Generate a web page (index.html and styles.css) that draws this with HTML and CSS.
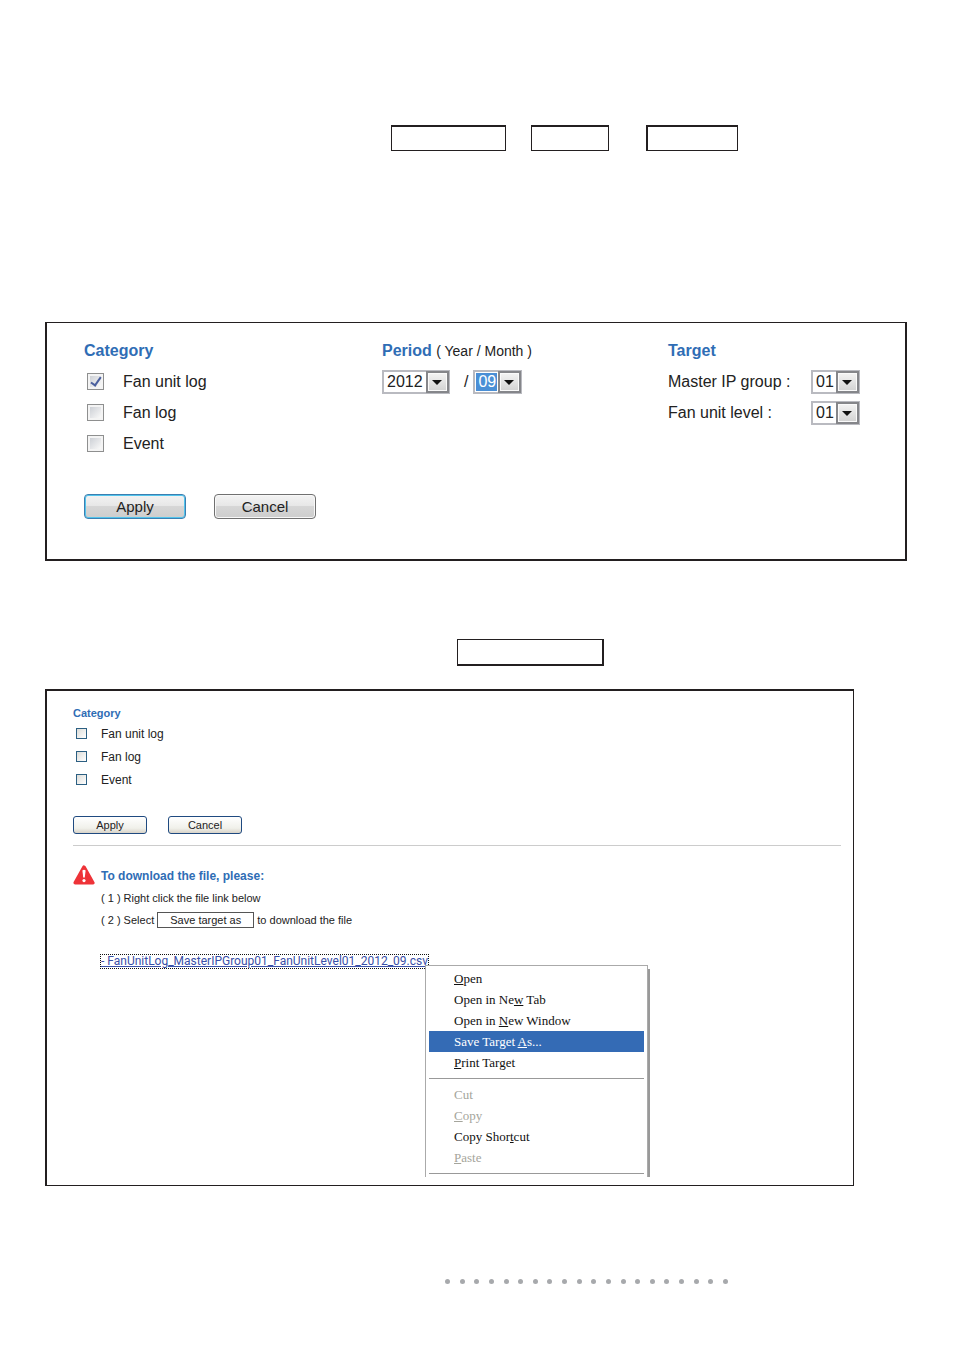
FILE: index.html
```html
<!DOCTYPE html>
<html lang="en">
<head>
    <meta charset="UTF-8">
    <meta name="viewport" content="width=device-width, initial-scale=1.0">
    <title>Log Download</title>
    <link rel="stylesheet" href="styles.css">
</head>
<body>
    <main class="page">
        <div class="frames frames-top">
            <span class="frame frame-large"></span>
            <span class="frame frame-small"></span>
            <span class="frame frame-medium"></span>
        </div>

        <form class="panel filter-panel">
            <div class="columns">
                <section>
                    <h2>Category</h2>
                    <label class="row"><input type="checkbox" checked>Fan unit log</label>
                    <label class="row"><input type="checkbox">Fan log</label>
                    <label class="row"><input type="checkbox">Event</label>
                </section>
                <section>
                    <h2>Period <small>( Year / Month )</small></h2>
                    <div class="row">
                        <span class="select select-year">
                            <select aria-label="Year"><option>2012</option></select>
                        </span>
                        <span class="slash">/</span>
                        <span class="select select-active">
                            <select aria-label="Month"><option>09</option></select>
                        </span>
                    </div>
                </section>
                <section>
                    <h2>Target</h2>
                    <div class="row">
                        <label class="target-label" for="group">Master IP group :</label>
                        <span class="select"><select id="group"><option>01</option></select></span>
                    </div>
                    <div class="row">
                        <label class="target-label" for="level">Fan unit level :</label>
                        <span class="select"><select id="level"><option>01</option></select></span>
                    </div>
                </section>
            </div>
            <div class="actions">
                <button type="button" class="btn btn-default">Apply</button>
                <button type="button" class="btn">Cancel</button>
            </div>
        </form>

        <div class="frames frames-middle">
            <span class="frame frame-wide"></span>
        </div>

        <div class="panel download-panel">
            <form>
                <h2>Category</h2>
                <label class="row"><input type="checkbox">Fan unit log</label>
                <label class="row"><input type="checkbox">Fan log</label>
                <label class="row"><input type="checkbox">Event</label>
                <div class="actions">
                    <button type="button" class="btn">Apply</button>
                    <button type="button" class="btn">Cancel</button>
                </div>
            </form>
            <hr>
            <div class="notice">
                <svg class="warning" viewBox="0 0 22 20" width="22" height="20" aria-hidden="true">
                    <path d="M11 2.2 L19.8 17.8 H2.2 Z" fill="#ee3338" stroke="#ee3338" stroke-width="3.6" stroke-linejoin="round"/>
                    <path d="M9.4 5.4 Q11 4.2 12.6 5.4 L11.8 12.6 H10.2 Z" fill="#fff"/>
                    <circle cx="11" cy="15.6" r="1.6" fill="#fff"/>
                </svg>
                <div class="steps">
                    <h2>To download the file, please:</h2>
                    <p>( 1 ) Right click the file link below</p>
                    <p>( 2 ) Select <span class="key">Save target as</span> to download the file</p>
                    <div class="file">
                        <a href="#">- FanUnitLog_MasterIPGroup01_FanUnitLevel01_2012_09.csv</a>
                        <div class="menu">
                            <button type="button"><u>O</u>pen</button>
                            <button type="button">Open in Ne<u>w</u> Tab</button>
                            <button type="button">Open in <u>N</u>ew Window</button>
                            <button type="button" class="selected">Save Target <u>A</u>s...</button>
                            <button type="button"><u>P</u>rint Target</button>
                            <hr>
                            <button type="button" disabled>Cut</button>
                            <button type="button" disabled><u>C</u>opy</button>
                            <button type="button">Copy Shor<u>t</u>cut</button>
                            <button type="button" disabled><u>P</u>aste</button>
                            <hr>
                        </div>
                    </div>
                </div>
            </div>
        </div>

        <div class="dots">
            <i></i><i></i><i></i><i></i><i></i><i></i><i></i><i></i><i></i><i></i>
            <i></i><i></i><i></i><i></i><i></i><i></i><i></i><i></i><i></i><i></i>
        </div>
    </main>
</body>
</html>
```
FILE: styles.css
```css
:root {
    --line: #231f20;
    --heading: #2f6db5;
    --text: #222;
    --menu-highlight: #346bb5;
}

*,
*::before,
*::after {
    box-sizing: border-box;
}

body {
    margin: 0;
    background-color: #fff;
    color: var(--text);
    font-family: "Liberation Sans", Arial, sans-serif;
    font-size: 16px;
}

h2,
p {
    margin: 0;
}

h2 {
    color: var(--heading);
    font-size: 16px;
    font-weight: bold;
}

button,
select {
    color: inherit;
    font-family: inherit;
}

input[type="checkbox"] {
    appearance: none;
    flex: none;
    margin: 0;
}

.page {
    padding: 125px 47px 60px 45px;
}

/* empty outlined boxes */
.frames {
    display: flex;
}

.frames-top {
    padding-left: 346px;
}

.frames-middle {
    margin: 78px 0 23px;
    padding-left: 412px;
}

.frame {
    height: 26px;
    border: 1px solid var(--line);
    border-top-width: 2px;
}

.frame-large {
    width: 115px;
}

.frame-small {
    width: 78px;
    margin-left: 25px;
}

.frame-medium {
    width: 92px;
    margin-left: 37px;
    border-left-width: 2px;
}

.frame-wide {
    width: 147px;
    height: 27px;
    border-width: 1px 2px 2px 1px;
}

.panel {
    border: 2px solid var(--line);
}

.row {
    display: flex;
    align-items: center;
}

/* filter form */
.filter-panel {
    margin-top: 171px;
    padding: 12px 0 40px 37px;
    border-top-width: 1px;
}

.columns {
    display: grid;
    grid-template-columns: 298fr 286fr 237fr;
}

.filter-panel h2 {
    line-height: 31px;
}

.filter-panel small {
    color: var(--text);
    font-size: 14px;
    font-weight: normal;
    line-height: 1;
}

.filter-panel .row {
    height: 31px;
}

.filter-panel input {
    width: 17px;
    height: 17px;
    margin: 0 19px 0 3px;
    border: 1px solid #8e8f8f;
    background: linear-gradient(135deg, #c4c8cf, #f6f6f6 80%);
    box-shadow: inset 0 0 0 2px #f4f4f4;
}

.filter-panel input:checked {
    display: flex;
    justify-content: center;
    padding-top: 1px;
}

.filter-panel input:checked::after {
    content: "";
    width: 6px;
    height: 11px;
    border: solid #4a5f9e;
    border-width: 0 2px 2px 0;
    transform: rotate(35deg);
}

.select {
    position: relative;
    width: 49px;
    height: 24px;
}

.select-year {
    width: 68px;
}

.select select {
    display: block;
    width: 100%;
    height: 100%;
    padding: 0 0 0 3px;
    border: 2px solid #b9bac0;
    border-radius: 0;
    background-color: #fff;
    font-size: 16px;
    appearance: none;
}

.select::before {
    content: "";
    position: absolute;
    top: 1px;
    right: 1px;
    width: 23px;
    height: 22px;
    border: 2px solid #85868a;
    background: linear-gradient(#f4f4f4, #d2d2d2);
    box-shadow: inset 0 0 0 1px #fafafa;
    pointer-events: none;
}

.select::after {
    content: "";
    position: absolute;
    top: 10px;
    right: 8px;
    border: solid transparent;
    border-width: 5px 5px 0;
    border-top-color: #111;
    pointer-events: none;
}

.select-active select {
    padding: 1px 23px 1px 1px;
    background: linear-gradient(#4a8fd6, #4a8fd6) content-box no-repeat #fff;
    color: #fff;
    text-indent: 2px;
}

.slash {
    padding: 0 5px 0 14px;
}

.target-label {
    width: 143px;
}

.actions {
    display: flex;
}

.filter-panel .actions {
    gap: 28px;
    margin-top: 35px;
}

.filter-panel .btn {
    width: 102px;
    height: 25px;
    padding: 0;
    border: 1px solid #707070;
    border-radius: 4px;
    background: linear-gradient(#f3f3f3, #e6e6e6 50%, #d6d6d6 50%, #cdcdcd);
    box-shadow: inset 0 0 0 1px #f8f8f8;
    font-size: 15px;
}

.filter-panel .btn-default {
    border-color: #3c7fb1;
    box-shadow: inset 0 0 0 1px #52c4ec;
}

/* download instructions */
.download-panel {
    min-height: 497px;
    margin-right: 53px;
    padding: 14px 12px 0 26px;
    border-right-width: 1px;
    border-bottom-width: 1px;
    font-size: 12px;
}

.download-panel h2 {
    font-size: 11px;
    line-height: 17px;
}

.download-panel .row {
    height: 23px;
}

.download-panel input {
    width: 11px;
    height: 11px;
    margin: 0 14px 0 3px;
    border: 1px solid #2c5f82;
    background: linear-gradient(135deg, #dcdcd8, #fff);
}

.download-panel .actions {
    gap: 21px;
    margin-top: 25px;
}

.download-panel .btn {
    width: 74px;
    height: 18px;
    padding: 0;
    border: 1px solid #1f4a80;
    border-radius: 3px;
    background: linear-gradient(#fff, #f0f0ea 70%, #d8d3c8);
    font-size: 11px;
}

hr {
    margin: 11px 0 0;
    border: 0;
    border-top: 1px solid #ccc;
}

.notice {
    display: flex;
    gap: 6px;
    padding-top: 19px;
}

.warning {
    flex: none;
}

.steps {
    font-size: 11px;
    line-height: 22px;
}

.download-panel .steps h2 {
    font-size: 12px;
    line-height: 22px;
}

.key {
    display: inline-block;
    width: 97px;
    height: 16px;
    border: 1px solid #555;
    line-height: 14px;
    text-align: center;
}

.file {
    position: relative;
    width: fit-content;
    margin-top: 24px;
    line-height: 13px;
}

.file a {
    display: block;
    outline: 1px dotted #111;
    color: #3a50a8;
    font-family: Roboto, "Liberation Sans", sans-serif;
    font-size: 12px;
    white-space: nowrap;
}

/* context menu over the link */
.menu {
    position: absolute;
    top: 10px;
    left: 324px;
    width: 223px;
    padding: 2px 3px;
    border: 1px solid #aaa;
    border-bottom: 0;
    background-color: #fff;
    box-shadow: 3px 3px 0 -1px #999;
    clip-path: inset(0 -4px 0 0);
}

.menu button {
    display: block;
    width: 100%;
    height: 21px;
    padding: 0 0 0 25px;
    border: 0;
    background-color: transparent;
    color: #111;
    font-family: "Liberation Serif", "Times New Roman", serif;
    font-size: 13px;
    line-height: 21px;
    text-align: left;
}

.menu button:disabled {
    color: #a5a59c;
}

.menu .selected {
    background-color: var(--menu-highlight);
    color: #fff;
}

.menu hr {
    margin: 5px 0;
    border-top-color: #999;
}

.menu hr:last-child {
    margin-bottom: 1px;
}

.dots {
    display: flex;
    justify-content: space-between;
    width: 283px;
    margin: 93px 0 0 400px;
}

.dots i {
    width: 5px;
    height: 5px;
    border-radius: 50%;
    background-color: #a7a9ac;
}
```
